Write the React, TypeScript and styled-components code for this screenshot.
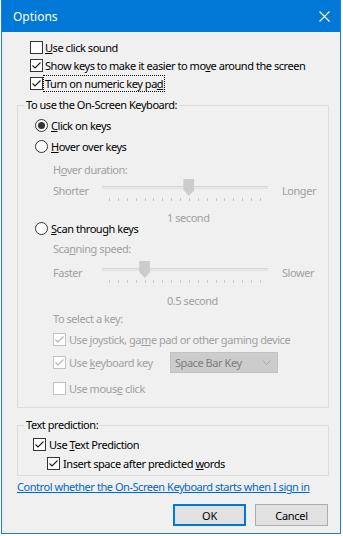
import React from "react";
import styled, { createGlobalStyle } from "styled-components";

const GlobalStyle = createGlobalStyle`
  html, body { margin: 0; padding: 0; background: #ffffff; }
  body {
    font-family: "Noto Sans", "Segoe UI", sans-serif;
    font-size: 11px;
    letter-spacing: -0.45px;
    color: #000000;
  }
  #root { width: 343px; height: 536px; }
`;

const Window = styled.div`
  width: 340px;
  height: 534px;
  margin-left: 1px;
  box-sizing: border-box;
  border: 1px solid #1c7fd6;
  border-top: none;
  background: #f0f0f0;
  display: flex;
  flex-direction: column;
`;

const TitleBar = styled.div`
  height: 32px;
  flex: none;
  background: #0078d7;
  color: #ffffff;
  display: flex;
  align-items: center;
  justify-content: space-between;
  padding: 0 10px 0 11px;
  font-size: 12px;
  letter-spacing: 0;
`;

const Body = styled.div`
  display: flex;
  flex-direction: column;
  padding: 6px 11px 0 15px;
`;

const Row = styled.div<{ $indent: number; $mt?: number; $h?: number; $gap?: number }>`
  display: flex;
  align-items: center;
  height: ${(p) => p.$h ?? 18}px;
  margin-top: ${(p) => p.$mt ?? 0}px;
  padding-left: ${(p) => p.$indent}px;
  gap: ${(p) => p.$gap ?? 2}px;
`;

const Label = styled.span<{ $disabled?: boolean; $focus?: boolean; $w?: number }>`
  color: ${(p) => (p.$disabled ? "#a0a0a0" : "#000000")};
  line-height: 13px;
  white-space: nowrap;
  outline: ${(p) => (p.$focus ? "1px dotted #000000" : "none")};
  outline-offset: 1px;
  width: ${(p) => (p.$w ? `${p.$w}px` : "auto")};
  flex: none;
`;

const Box = styled.span<{ $disabled?: boolean }>`
  width: 13px;
  height: 13px;
  box-sizing: border-box;
  flex: none;
  border: 1px solid ${(p) => (p.$disabled ? "#c2c2c2" : "#333333")};
  background: #ffffff;
  display: inline-flex;
  align-items: center;
  justify-content: center;
`;

const RadioCircle = styled.span<{ $checked?: boolean }>`
  width: 13px;
  height: 13px;
  box-sizing: border-box;
  flex: none;
  border-radius: 50%;
  border: 1px solid #333333;
  background: #ffffff;
  display: inline-flex;
  align-items: center;
  justify-content: center;
  &::after {
    content: "";
    width: 7px;
    height: 7px;
    border-radius: 50%;
    background: #333333;
    display: ${(p) => (p.$checked ? "block" : "none")};
  }
`;

const Group = styled.fieldset<{ $pb: number; $mt: number }>`
  margin: ${(p) => p.$mt}px 0 0 0;
  padding: 0 0 ${(p) => p.$pb}px 0;
  border: 1px solid #dcdcdc;
  min-width: 0;
  width: 312px;
  box-sizing: border-box;
  display: flex;
  flex-direction: column;
`;

const Legend = styled.legend`
  margin-left: 6px;
  padding: 0 2px;
  line-height: 16px;
  color: #000000;
`;

const Caption = styled.div<{ $indent: number; $mt?: number; $mb?: number }>`
  padding-left: ${(p) => p.$indent}px;
  margin-top: ${(p) => p.$mt ?? 0}px;
  margin-bottom: ${(p) => p.$mb ?? 0}px;
  line-height: 16px;
  height: 16px;
  color: #a0a0a0;
  white-space: nowrap;
`;

const SliderRow = styled.div<{ $mt: number }>`
  display: flex;
  align-items: flex-start;
  height: 24px;
  margin-top: ${(p) => p.$mt}px;
  padding-left: 35px;
  color: #a0a0a0;
`;

const SliderLabel = styled.span<{ $w?: number; $ml?: number }>`
  width: ${(p) => (p.$w ? `${p.$w}px` : "auto")};
  margin-left: ${(p) => p.$ml ?? 0}px;
  margin-top: 4px;
  line-height: 16px;
  flex: none;
`;

const TrackArea = styled.div`
  position: relative;
  width: 166px;
  height: 24px;
  flex: none;
  display: flex;
  flex-direction: column;
`;

const TrackLine = styled.div`
  margin-top: 7px;
  height: 3px;
  box-sizing: border-box;
  border-top: 1px solid #d6d6d6;
  border-bottom: 1px solid #e2e2e2;
  background: #e9e9e9;
`;

const Ticks = styled.div`
  margin-top: 9px;
  padding: 0 7px 0 7px;
  display: flex;
  justify-content: space-between;
  height: 3px;
`;

const Tick = styled.span`
  width: 1px;
  height: 3px;
  background: #c8c8c8;
`;

const Thumb = styled.span`
  position: absolute;
  top: 0;
  width: 11px;
  height: 17px;
  background: #cccccc;
  clip-path: polygon(0 0, 100% 0, 100% 64%, 50% 100%, 0 64%);
`;

const Select = styled.div`
  width: 108px;
  height: 21px;
  box-sizing: border-box;
  border: 1px solid #c2c2c2;
  background: #cccccc;
  color: #7c7c7c;
  display: flex;
  align-items: center;
  justify-content: space-between;
  padding: 0 6px 0 4px;
  flex: none;
`;

const Link = styled.a`
  display: block;
  margin-top: 3px;
  line-height: 16px;
  height: 16px;
  color: #0066cc;
  text-decoration: underline;
  white-space: nowrap;
`;

const ButtonBar = styled.div`
  display: flex;
  justify-content: flex-end;
  gap: 9px;
  margin-top: 9px;
  padding-right: 1px;
`;

const Button = styled.button<{ $default?: boolean }>`
  width: 73px;
  height: 22px;
  box-sizing: border-box;
  margin: 0;
  padding: 0;
  font-family: inherit;
  font-size: 11px;
  letter-spacing: -0.3px;
  color: #000000;
  background: #e1e1e1;
  border: 1px solid ${(p) => (p.$default ? "#0078d7" : "#adadad")};
  box-shadow: ${(p) => (p.$default ? "inset 0 0 0 1px #0078d7" : "none")};
`;

const Check: React.FC<{ disabled?: boolean }> = ({ disabled }) => (
  <svg width="11" height="11" viewBox="0 0 11 11">
    <path
      d="M1.5 5.5 L4 8 L9.5 2.5"
      fill="none"
      stroke={disabled ? "#b4b4b4" : "#1b1b1b"}
      strokeWidth="1.1"
    />
  </svg>
);

const CheckBox: React.FC<{ checked?: boolean; disabled?: boolean }> = ({ checked, disabled }) => (
  <Box $disabled={disabled}>{checked && <Check disabled={disabled} />}</Box>
);

const TICKS = 18;
const TICK_START = 7;
const TICK_STEP = (166 - 7 - 8 - 1) / (TICKS - 1);

const Slider: React.FC<{ left: string; right: string; value: number; mt: number }> = ({
  left,
  right,
  value,
  mt,
}) => (
  <SliderRow $mt={mt}>
    <SliderLabel $w={49}>{left}</SliderLabel>
    <TrackArea>
      <TrackLine />
      <Ticks>
        {Array.from({ length: TICKS }).map((_, i) => (
          <Tick key={i} />
        ))}
      </Ticks>
      <Thumb style={{ left: `${TICK_START + value * TICK_STEP - 5}px` }} />
    </TrackArea>
    <SliderLabel $ml={14}>{right}</SliderLabel>
  </SliderRow>
);

export default function App() {
  return (
    <>
      <GlobalStyle />
      <Window>
        <TitleBar>
          <span>Options</span>
          <svg width="11" height="11" viewBox="0 0 11 11">
            <path d="M0.5 0.5 L10.5 10.5 M10.5 0.5 L0.5 10.5" stroke="#ffffff" strokeWidth="1.1" />
          </svg>
        </TitleBar>
        <Body>
          <Row $indent={13}>
            <CheckBox />
            <Label>
              <u>U</u>se click sound
            </Label>
          </Row>
          <Row $indent={13}>
            <CheckBox checked />
            <Label>
              Show keys to make it easier to mo<u>v</u>e around the screen
            </Label>
          </Row>
          <Row $indent={13}>
            <CheckBox checked />
            <Label $focus>
              Turn on numeric key pa<u>d</u>
            </Label>
          </Row>

          <Group $mt={5} $pb={10}>
            <Legend>To use the On-Screen Keyboard:</Legend>
            <Row $indent={17} $mt={3} $gap={3}>
              <RadioCircle $checked />
              <Label>
                <u>C</u>lick on keys
              </Label>
            </Row>
            <Row $indent={17} $mt={3} $gap={3}>
              <RadioCircle />
              <Label>
                <u>H</u>over over keys
              </Label>
            </Row>
            <Caption $indent={35} $mt={7}>
              H<u>o</u>ver duration:
            </Caption>
            <Slider left="Shorter" right="Longer" value={9} mt={1} />
            <Caption $indent={149} $mt={7} $mb={-7}>
              1 second
            </Caption>
            <Row $indent={17} $gap={3}>
              <RadioCircle />
              <Label>
                <u>S</u>can through keys
              </Label>
            </Row>
            <Caption $indent={35} $mt={4}>
              Sca<u>n</u>ning speed:
            </Caption>
            <Slider left="Faster" right="Slower" value={4} mt={4} />
            <Caption $indent={149} $mt={8}>
              0.5 second
            </Caption>
            <Caption $indent={35} $mt={2}>
              To select a key:
            </Caption>
            <Row $indent={35} $mt={3} $gap={3}>
              <CheckBox checked disabled />
              <Label $disabled>
                Use joystick, ga<u>m</u>e pad or other gaming device
              </Label>
            </Row>
            <Row $indent={35} $mt={4} $h={21} $gap={3}>
              <CheckBox checked disabled />
              <Label $disabled $w={98}>
                Use <u>k</u>eyboard key
              </Label>
              <Select>
                <span>Space Bar Key</span>
                <svg width="9" height="5" viewBox="0 0 9 5">
                  <path d="M0.5 0.5 L4.5 4.5 L8.5 0.5" fill="none" stroke="#a8a8a8" strokeWidth="1" />
                </svg>
              </Select>
            </Row>
            <Row $indent={35} $mt={6} $gap={3}>
              <CheckBox disabled />
              <Label $disabled>
                Use mous<u>e</u> click
              </Label>
            </Row>
          </Group>

          <Group $mt={9} $pb={3}>
            <Legend>Text prediction:</Legend>
            <Row $indent={15} $mt={2} $gap={3}>
              <CheckBox checked />
              <Label>
                Use <u>T</u>ext Prediction
              </Label>
            </Row>
            <Row $indent={29} $mt={1} $gap={3}>
              <CheckBox checked />
              <Label>
                Insert space after predicted <u>w</u>ords
              </Label>
            </Row>
          </Group>

          <Link href="#">Control whether the On-Screen Keyboard starts when I sign in</Link>

          <ButtonBar>
            <Button $default>OK</Button>
            <Button>Cancel</Button>
          </ButtonBar>
        </Body>
      </Window>
    </>
  );
}
